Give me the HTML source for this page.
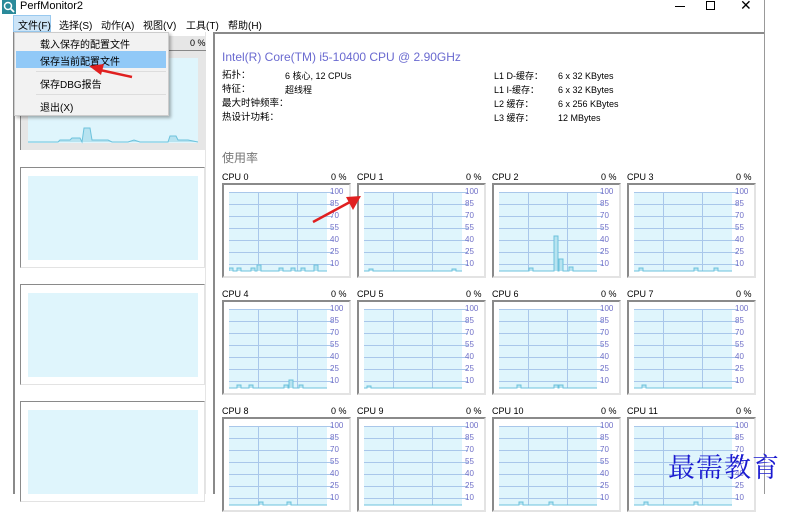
<!DOCTYPE html>
<html><head><meta charset="utf-8"><style>
*{margin:0;padding:0;box-sizing:border-box}
body{width:792px;height:494px;overflow:hidden;background:#fff;font-family:"Liberation Sans","Noto Sans CJK SC",sans-serif;font-size:10px;color:#000;position:relative}
.a{position:absolute}
.t{white-space:nowrap}
.box{position:absolute;border:2px solid #8a8a8a;border-right-color:#e3e3e3;border-bottom-color:#e3e3e3;background:#fff}
.ch{position:absolute;background:#dff5fc}
.lab{position:absolute;font-size:8px;color:#7070c8;white-space:nowrap}
</style></head><body>
<!-- title bar -->
<div class="a" style="left:0;top:0;width:792px;height:16px;background:#fff"></div>
<svg class="a" style="left:2px;top:0" width="14" height="14"><rect x="0" y="0" width="14" height="14" fill="#2a8a9a"/><circle cx="6" cy="6" r="3.5" fill="none" stroke="#fff" stroke-width="1.5"/><line x1="8.5" y1="8.5" x2="12" y2="12" stroke="#fff" stroke-width="1.8"/></svg>
<div class="a t" style="left:20px;top:0px;font-size:11px">PerfMonitor2</div>
<div class="a" style="left:675px;top:6px;width:10px;height:1px;background:#000"></div>
<div class="a" style="left:706px;top:1px;width:9px;height:9px;border:1px solid #000"></div>
<div class="a t" style="left:740px;top:-3px;font-size:14px">✕</div>
<!-- menu bar -->
<div class="a" style="left:13px;top:15px;width:38px;height:17px;background:#cce4f7;border:1px solid #99c9ef"></div>
<div class="a t" style="left:18px;top:17px;font-size:10px;word-spacing:0">文件(F)</div>
<div class="a t" style="left:59px;top:17px">选择(S)</div>
<div class="a t" style="left:101px;top:17px">动作(A)</div>
<div class="a t" style="left:143px;top:17px">视图(V)</div>
<div class="a t" style="left:186px;top:17px">工具(T)</div>
<div class="a t" style="left:228px;top:17px">帮助(H)</div>
<!-- window frame -->
<div class="a" style="left:13px;top:32px;width:2px;height:462px;background:#8a8a8a"></div>
<div class="a" style="left:213px;top:32px;width:552px;height:2px;background:#8a8a8a"></div>
<div class="a" style="left:213px;top:32px;width:2px;height:462px;background:#8a8a8a"></div>
<div class="a" style="left:764px;top:0;width:1px;height:494px;background:#999"></div>
<div class="a" style="left:205px;top:32px;width:1px;height:462px;background:#e5e5e5"></div>
<!-- left tiles -->
<div class="a" style="left:20px;top:36px;width:186px;height:114px;background:#e6e6e6"></div>
<div class="a t" style="left:190px;top:38px;font-size:9px">0 %</div>
<div class="a" style="left:20px;top:50px;width:186px;height:100px;border-top:1px solid #888;border-left:1px solid #888"></div>
<div class="ch" style="left:28px;top:58px;width:170px;height:85px"></div>
<svg class="a" style="left:28px;top:120px" width="170" height="24"><polyline points="0,22 30,22 32,20 42,20 44,18 52,18 54,22 56,8 62,8 64,20 80,20 84,22 100,22 106,20 112,22 140,22 142,16 148,16 150,20 160,20 170,22" fill="#b7e3f0" stroke="#6cc2dc" stroke-width="1"/></svg>
<div class="box" style="left:20px;top:167px;width:185px;height:101px;border-width:1px;border-color:#8a8a8a #e3e3e3 #e3e3e3 #8a8a8a"></div>
<div class="ch" style="left:28px;top:176px;width:170px;height:84px"></div>
<div class="box" style="left:20px;top:284px;width:185px;height:101px;border-width:1px;border-color:#8a8a8a #e3e3e3 #e3e3e3 #8a8a8a"></div>
<div class="ch" style="left:28px;top:293px;width:170px;height:84px"></div>
<div class="box" style="left:20px;top:401px;width:185px;height:101px;border-width:1px;border-color:#8a8a8a #e3e3e3 #e3e3e3 #8a8a8a"></div>
<div class="ch" style="left:28px;top:410px;width:170px;height:84px"></div>
<!-- info -->
<div class="a t" style="left:222px;top:50px;font-size:12px;color:#6a6ad0">Intel(R) Core(TM) i5-10400 CPU @ 2.90GHz</div>
<div class="a t" style="left:222px;top:69px;line-height:14px;font-size:9.5px">拓扑：<br>特征：<br>最大时钟频率：<br>热设计功耗：</div>
<div class="a t" style="left:285px;top:69px;line-height:14px;font-size:9px">6 核心, 12 CPUs<br>超线程</div>
<div class="a t" style="left:494px;top:69px;line-height:14px;font-size:9px">L1 D-缓存：<br>L1 I-缓存：<br>L2 缓存：<br>L3 缓存：</div>
<div class="a t" style="left:558px;top:69px;line-height:14px;font-size:9px">6 x 32 KBytes<br>6 x 32 KBytes<br>6 x 256 KBytes<br>12 MBytes</div>
<div class="a t" style="left:222px;top:149px;font-size:12px;color:#777">使用率</div>
<div id="tiles"></div>
<!-- dropdown menu -->
<div class="a" style="left:14px;top:32px;width:155px;height:84px;background:#f2f2f2;border:1px solid #ccc;box-shadow:2px 2px 3px rgba(0,0,0,.3)"></div>
<div class="a" style="left:16px;top:51px;width:150px;height:17px;background:#91c9f7"></div>
<div class="a t" style="left:40px;top:36px">载入保存的配置文件</div>
<div class="a t" style="left:40px;top:53px">保存当前配置文件</div>
<div class="a" style="left:36px;top:71px;width:130px;height:1px;background:#ddd"></div>
<div class="a t" style="left:40px;top:76px">保存DBG报告</div>
<div class="a" style="left:36px;top:94px;width:130px;height:1px;background:#ddd"></div>
<div class="a t" style="left:40px;top:99px">退出(X)</div>
<!-- arrows -->
<svg class="a" style="left:0;top:0" width="792" height="494">
<line x1="132" y1="77" x2="100" y2="70" stroke="#e02020" stroke-width="2.5"/><polygon points="89,66 104,64 101,75" fill="#e02020"/>
<line x1="313" y1="222" x2="350" y2="202" stroke="#e02020" stroke-width="2.5"/><polygon points="361,196 353,210 346,197" fill="#e02020"/>
</svg>
<div class="a t" style="left:668px;top:446px;font-size:27px;color:#1a1ad0;font-family:'Noto Serif CJK SC',serif;letter-spacing:1px">最需教育</div>
<script>
var h='';var spikes={0:[[0,3],[8,3],[22,3],[28,6],[50,3],[62,3],[72,3],[85,6]],1:[[5,2],[88,2]],2:[[30,3],[55,35],[60,12],[70,4]],3:[[5,3],[60,3],[80,3]],4:[[8,3],[20,3],[55,3],[60,8],[70,3]],5:[[3,2]],6:[[18,3],[55,3],[60,3]],7:[[8,3]],8:[[30,3],[58,3]],9:[],10:[[20,3],[50,3]],11:[[10,3],[60,3]]};
for(var i=0;i<12;i++){var c=i%4,r=Math.floor(i/4);var x=222+c*135,y=172+r*117;
h+='<div class="a t" style="left:'+x+'px;top:'+y+'px;font-size:9px">CPU '+i+'</div>';
h+='<div class="a t" style="left:'+(x+109)+'px;top:'+y+'px;font-size:9px">0 %</div>';
h+='<div class="box" style="left:'+x+'px;top:'+(y+11)+'px;width:129px;height:95px"></div>';
var cx=x+7,cy=y+20;
var s='<svg class="a" style="left:'+cx+'px;top:'+cy+'px" width="110" height="80">';
s+='<rect x="0" y="0" width="98" height="79" fill="#dff5fc"/>';
for(var k=0;k<7;k++){var yy=k*12+0.5;s+='<line x1="0" x2="104" y1="'+yy+'" y2="'+yy+'" stroke="#a9c7ea"/>';}
s+='<line x1="29.5" x2="29.5" y1="0" y2="79" stroke="#a9c7ea"/><line x1="68.5" x2="68.5" y1="0" y2="79" stroke="#a9c7ea"/>';
var pts='0,79';(spikes[i]||[]).forEach(function(p){pts+=' '+p[0]+',79 '+p[0]+','+(79-p[1])+' '+(p[0]+4)+','+(79-p[1])+' '+(p[0]+4)+',79';});pts+=' 98,79';
s+='<polyline points="'+pts+'" fill="#b7e3f0" stroke="#6cc2dc"/>';
s+='</svg>';h+=s;
var labs=['100','85','70','55','40','25','10'];
for(var k=0;k<7;k++)h+='<div class="lab" style="left:'+(x+108)+'px;top:'+(cy-5+k*12)+'px">'+labs[k]+'</div>';
}
document.getElementById('tiles').innerHTML=h;
</script>
</body></html>
